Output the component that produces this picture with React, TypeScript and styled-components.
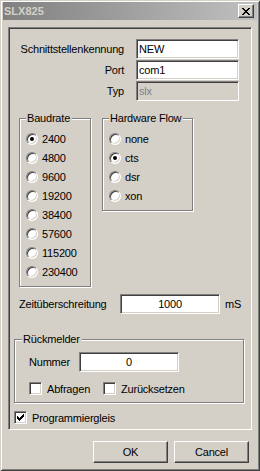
import React from "react";
import styled, { createGlobalStyle, css } from "styled-components";

const Global = createGlobalStyle`
  html, body { margin: 0; padding: 0; background: #d4d0c8; }
  body { font-family: "Liberation Sans", Arial, sans-serif; font-size: 11px; color: #000; letter-spacing: -0.2px; }
  * { box-sizing: border-box; }
`;

const Window = styled.div`
  width: 260px;
  height: 471px;
  background: #d4d0c8;
  padding: 2px 3px 0;
  box-shadow: inset 1px 1px 0 #d4d0c8, inset -1px -1px 0 #404040,
    inset 2px 2px 0 #ffffff, inset -2px -2px 0 #808080;
  display: flex;
  flex-direction: column;
`;

const TitleBar = styled.div`
  height: 18px;
  display: flex;
  align-items: center;
  justify-content: space-between;
  padding: 0 3px 0 1px;
  background: linear-gradient(to right, #808080, #c0c0c0);
`;

const Title = styled.span`
  font-weight: bold;
  font-size: 11px;
  letter-spacing: 0;
  color: #d4d0c8;
`;

const raised = css`
  background: #d4d0c8;
  border-style: solid;
  border-width: 1px;
  border-color: #ffffff #404040 #404040 #ffffff;
  box-shadow: inset -1px -1px 0 #808080;
`;

const sunken = css`
  border-style: solid;
  border-width: 1px;
  border-color: #808080 #ffffff #ffffff #808080;
  box-shadow: inset 1px 1px 0 #404040, inset -1px -1px 0 #d4d0c8;
`;

const CloseButton = styled.div`
  ${raised};
  width: 16px;
  height: 14px;
  display: flex;
  align-items: center;
  justify-content: center;
`;

const Body = styled.div`
  padding: 7px 5px 0 5px;
  display: flex;
  flex-direction: column;
`;

const Panel = styled.div`
  width: 244px;
  height: 403px;
  border-style: solid;
  border-width: 1px;
  border-color: #808080 #ffffff #ffffff #808080;
  box-shadow: inset 1px 1px 0 #404040;
  padding: 11px 0 0 1px;
  display: flex;
  flex-direction: column;
`;

const FormGrid = styled.div`
  display: grid;
  grid-template-columns: 114px 103px;
  grid-auto-rows: 20px;
  column-gap: 12px;
  row-gap: 1px;
`;

const Label = styled.span`
  display: flex;
  align-items: center;
  justify-content: flex-end;
  white-space: nowrap;
`;

const Field = styled.div<{ $disabled?: boolean; $center?: boolean; $width?: number }>`
  ${sunken};
  height: 20px;
  width: ${(p) => (p.$width ? `${p.$width}px` : "auto")};
  background: ${(p) => (p.$disabled ? "#d4d0c8" : "#ffffff")};
  color: ${(p) => (p.$disabled ? "#808080" : "#000")};
  display: flex;
  align-items: center;
  justify-content: ${(p) => (p.$center ? "center" : "flex-start")};
  padding: 0 2px;
  white-space: nowrap;
`;

const GroupsRow = styled.div`
  display: flex;
  align-items: flex-start;
  gap: 11px;
  margin: 11px 0 0 9px;
`;

const Group = styled.fieldset<{ $width: number }>`
  width: ${(p) => p.$width}px;
  margin: 0;
  padding: 4px 0 5px 6px;
  min-width: 0;
  border: 1px solid #808080;
  box-shadow: inset 1px 1px 0 #ffffff, 1px 1px 0 #ffffff;
`;

const Legend = styled.legend`
  padding: 0 2px 0 1px;
  line-height: 13px;
  background: #d4d0c8;
`;

const RadioRow = styled.label`
  height: 19px;
  display: flex;
  align-items: center;
  gap: 4px;
  white-space: nowrap;
`;

const RadioCircle = styled.span<{ $checked?: boolean }>`
  width: 12px;
  height: 12px;
  border-radius: 50%;
  background: #ffffff;
  border-style: solid;
  border-width: 1px;
  border-color: #808080 #ffffff #ffffff #808080;
  box-shadow: inset 1px 1px 0 #404040, inset -1px -1px 0 #d4d0c8;
  display: flex;
  align-items: center;
  justify-content: center;
  flex: none;
  &::after {
    content: "";
    width: 4px;
    height: 4px;
    border-radius: 50%;
    background: ${(p) => (p.$checked ? "#000" : "transparent")};
  }
`;

const TimeoutRow = styled.div`
  display: flex;
  align-items: center;
  margin: 7px 0 0 9px;
`;

const TimeoutLabel = styled.span`
  width: 101px;
  white-space: nowrap;
`;

const Unit = styled.span`
  margin-left: 5px;
`;

const Rueck = styled.fieldset`
  width: 230px;
  margin: 19px 0 0 4px;
  padding: 6px 0 5px 14px;
  min-width: 0;
  border: 1px solid #808080;
  box-shadow: inset 1px 1px 0 #ffffff, 1px 1px 0 #ffffff;
`;

const RueckLegend = styled(Legend)`
  margin-left: -7px;
`;

const NumRow = styled.div`
  display: flex;
  align-items: center;
`;

const NumLabel = styled.span`
  width: 50px;
`;

const CheckRow = styled.div<{ $mt: number; $ml?: number }>`
  display: flex;
  align-items: center;
  height: 17px;
  margin-top: ${(p) => p.$mt}px;
  margin-left: ${(p) => p.$ml ?? 0}px;
`;

const CheckItem = styled.label<{ $width?: number }>`
  display: flex;
  align-items: center;
  gap: 5px;
  width: ${(p) => (p.$width ? `${p.$width}px` : "auto")};
  white-space: nowrap;
`;

const CheckBox = styled.span`
  ${sunken};
  width: 13px;
  height: 13px;
  background: #ffffff;
  display: flex;
  align-items: center;
  justify-content: center;
  flex: none;
`;

const ButtonRow = styled.div`
  display: flex;
  justify-content: flex-end;
  gap: 6px;
  margin-top: 11px;
  padding-right: 3px;
`;

const Button = styled.div`
  ${raised};
  width: 75px;
  height: 22px;
  display: flex;
  align-items: center;
  justify-content: center;
`;

const CloseIcon = () => (
  <svg width="8" height="7" viewBox="0 0 8 7" shapeRendering="crispEdges">
    <rect x="0" y="0" width="2" height="1" />
    <rect x="6" y="0" width="2" height="1" />
    <rect x="1" y="1" width="2" height="1" />
    <rect x="5" y="1" width="2" height="1" />
    <rect x="2" y="2" width="4" height="1" />
    <rect x="3" y="3" width="2" height="1" />
    <rect x="2" y="4" width="4" height="1" />
    <rect x="1" y="5" width="2" height="1" />
    <rect x="5" y="5" width="2" height="1" />
    <rect x="0" y="6" width="2" height="1" />
    <rect x="6" y="6" width="2" height="1" />
  </svg>
);

const Check = () => (
  <svg width="7" height="7" viewBox="0 0 7 7" shapeRendering="crispEdges">
    <rect x="6" y="0" width="1" height="1" />
    <rect x="5" y="1" width="2" height="1" />
    <rect x="0" y="2" width="1" height="1" />
    <rect x="4" y="2" width="3" height="1" />
    <rect x="0" y="3" width="2" height="1" />
    <rect x="3" y="3" width="3" height="1" />
    <rect x="0" y="4" width="5" height="1" />
    <rect x="1" y="5" width="3" height="1" />
    <rect x="2" y="6" width="1" height="1" />
  </svg>
);

const Radio = ({ label, checked }: { label: string; checked?: boolean }) => (
  <RadioRow>
    <RadioCircle $checked={checked} />
    {label}
  </RadioRow>
);

const Checkbox = ({ label, checked, width }: { label: string; checked?: boolean; width?: number }) => (
  <CheckItem $width={width}>
    <CheckBox>{checked && <Check />}</CheckBox>
    {label}
  </CheckItem>
);

export default function App() {
  const bauds = ["2400", "4800", "9600", "19200", "38400", "57600", "115200", "230400"];
  const flows = ["none", "cts", "dsr", "xon"];
  return (
    <>
      <Global />
      <Window>
        <TitleBar>
          <Title>SLX825</Title>
          <CloseButton>
            <CloseIcon />
          </CloseButton>
        </TitleBar>
        <Body>
          <Panel>
            <FormGrid>
              <Label>Schnittstellenkennung</Label>
              <Field>NEW</Field>
              <Label>Port</Label>
              <Field>com1</Field>
              <Label>Typ</Label>
              <Field $disabled>slx</Field>
            </FormGrid>
            <GroupsRow>
              <Group $width={72}>
                <Legend>Baudrate</Legend>
                {bauds.map((b) => (
                  <Radio key={b} label={b} checked={b === "2400"} />
                ))}
              </Group>
              <Group $width={91}>
                <Legend>Hardware Flow</Legend>
                {flows.map((f) => (
                  <Radio key={f} label={f} checked={f === "cts"} />
                ))}
              </Group>
            </GroupsRow>
            <TimeoutRow>
              <TimeoutLabel>Zeitüberschreitung</TimeoutLabel>
              <Field $center $width={100}>1000</Field>
              <Unit>mS</Unit>
            </TimeoutRow>
            <Rueck>
              <RueckLegend>Rückmelder</RueckLegend>
              <NumRow>
                <NumLabel>Nummer</NumLabel>
                <Field $center $width={100}>0</Field>
              </NumRow>
              <CheckRow $mt={8}>
                <Checkbox label="Abfragen" width={74} />
                <Checkbox label="Zurücksetzen" />
              </CheckRow>
            </Rueck>
            <CheckRow $mt={6} $ml={4}>
              <Checkbox label="Programmiergleis" checked />
            </CheckRow>
          </Panel>
          <ButtonRow>
            <Button>OK</Button>
            <Button>Cancel</Button>
          </ButtonRow>
        </Body>
      </Window>
    </>
  );
}
